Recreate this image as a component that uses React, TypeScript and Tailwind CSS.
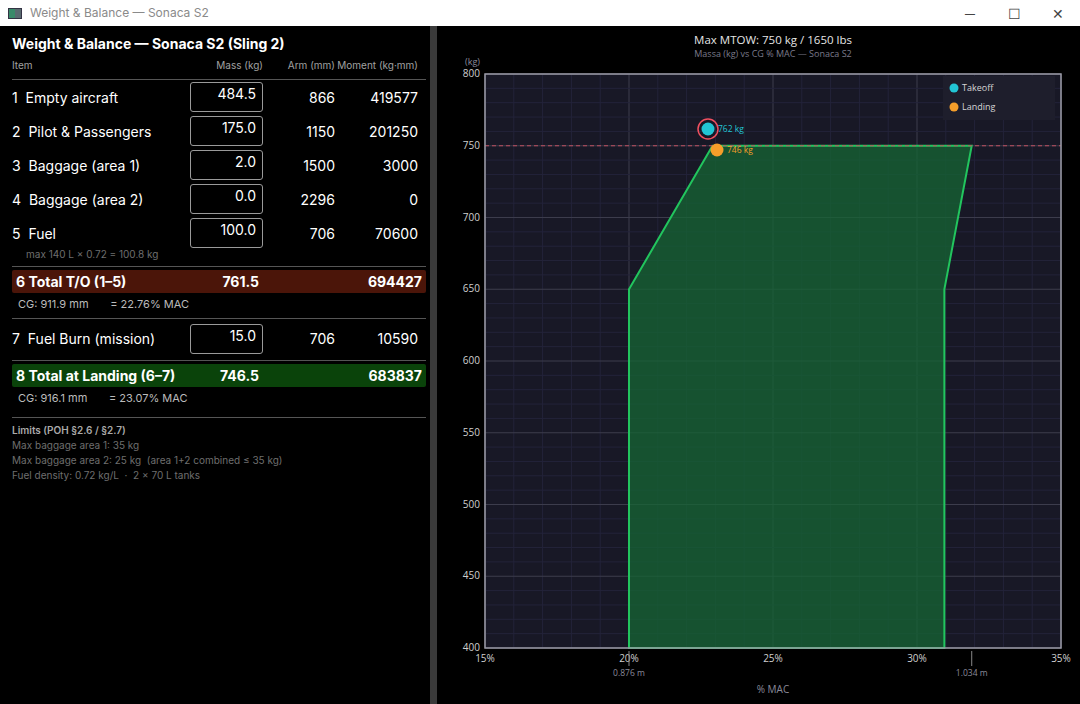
import React from "react";

const rows = [
  ["1", "Empty aircraft", "484.5", "866", "419577"],
  ["2", "Pilot & Passengers", "175.0", "1150", "201250"],
  ["3", "Baggage (area 1)", "2.0", "1500", "3000"],
  ["4", "Baggage (area 2)", "0.0", "2296", "0"],
  ["5", "Fuel", "100.0", "706", "70600"],
];

function Row({ r }: { r: string[] }) {
  return (
    <div className="flex items-center h-[34px]">
      <div className="flex-1 text-[14px] text-white whitespace-nowrap">{r[0]}&nbsp; {r[1]}</div>
      <div className="w-[73px] h-[30px] border border-[#9a9a9a] rounded-[3px] text-right pr-1.5 text-[14px] text-white leading-[22px]">{r[2]}</div>
      <div className="w-[72px] text-right text-[14px] text-white">{r[3]}</div>
      <div className="w-[91px] text-right text-[14px] text-white pr-[8px]">{r[4]}</div>
    </div>
  );
}

function Total({ label, v, m, bg }: { label: string; v: string; m: string; bg: string }) {
  return (
    <div className={`flex items-center h-[23px] ${bg} rounded-[2px] px-1 text-[14px] font-bold text-white whitespace-nowrap`}>
      <div className="w-[170px]">{label}</div>
      <div className="w-[73px] text-right">{v}</div>
      <div className="flex-1 text-right">{m}</div>
    </div>
  );
}

const X = (p: number) => 485 - 437 + (p - 15) * 28.8;
const Y = (m: number) => 74 - 26 + (800 - m) * 1.435;

function Chart() {
  const minorX = [];
  for (let p = 15; p <= 35; p += 1) minorX.push(p);
  const minorY = [];
  for (let m = 400; m <= 800; m += 10) minorY.push(m);
  const env = [
    [20, 400], [20, 650], [22.9, 750], [31.9, 750], [30.95, 650], [30.95, 400],
  ].map(([p, m]) => `${X(p)},${Y(m)}`).join(" ");
  return (
    <svg width="643" height="674" className="block" style={{ fontFamily: '"Open Sans", sans-serif' }}>
      <text x={X(25)} y="18" fill="#e5e5e5" fontSize="11.5" textAnchor="middle">Max MTOW: 750 kg  /  1650 lbs</text>
      <text x={X(25)} y="31" fill="#7a7a8a" fontSize="9" textAnchor="middle">Massa (kg) vs CG % MAC — Sonaca S2</text>
      <rect x={X(15)} y={Y(800)} width={X(35) - X(15)} height={Y(400) - Y(800)} fill="#181826" />
      {minorX.map((p) => (
        <line key={"x" + p} x1={X(p)} x2={X(p)} y1={Y(800)} y2={Y(400)} stroke={p % 5 === 0 ? "#3c3c4c" : "#23233a"} strokeWidth="1" />
      ))}
      {minorY.map((m) => (
        <line key={"y" + m} y1={Y(m)} y2={Y(m)} x1={X(15)} x2={X(35)} stroke={m % 50 === 0 ? "#3c3c4c" : "#23233a"} strokeWidth="1" />
      ))}
      <polygon points={env} fill="#166534" fillOpacity="0.75" stroke="#22c55e" strokeWidth="2" />
      <line x1={X(15)} x2={X(35)} y1={Y(750)} y2={Y(750)} stroke="#c05060" strokeDasharray="4 3" strokeWidth="1" />
      <rect x={X(15)} y={Y(800)} width={X(35) - X(15)} height={Y(400) - Y(800)} fill="none" stroke="#9a9aa6" strokeWidth="1.5" />
      {[400, 450, 500, 550, 600, 650, 700, 750, 800].map((m) => (
        <text key={m} x={X(15) - 5} y={Y(m) + 3} fill="#cfcfcf" fontSize="10" textAnchor="end">{m}</text>
      ))}
      <text x={X(15) - 20} y={Y(800) - 9} fill="#8a8a9a" fontSize="9">(kg)</text>
      {[15, 20, 25, 30, 35].map((p) => (
        <text key={p} x={X(p)} y={Y(400) + 14} fill="#cfcfcf" fontSize="10" textAnchor="middle">{p}%</text>
      ))}
      <line x1={X(20)} x2={X(20)} y1={Y(400) + 3} y2={Y(400) + 18} stroke="#888" />
      <line x1={X(31.9)} x2={X(31.9)} y1={Y(400) + 3} y2={Y(400) + 18} stroke="#888" />
      <text x={X(20)} y={Y(400) + 28} fill="#8a8a9a" fontSize="8.5" textAnchor="middle">0.876 m</text>
      <text x={X(31.9)} y={Y(400) + 28} fill="#8a8a9a" fontSize="8.5" textAnchor="middle">1.034 m</text>
      <text x={X(25)} y={Y(400) + 45} fill="#8a8a9a" fontSize="10" textAnchor="middle">% MAC</text>
      <circle cx={708 - 437} cy={129 - 26} r="10" fill="none" stroke="#f05060" strokeWidth="1.5" />
      <circle cx={708 - 437} cy={129 - 26} r="6.5" fill="#22c5d5" />
      <text x={718 - 437} y={132 - 26} fill="#22c5d5" fontSize="8.5">762 kg</text>
      <circle cx={717 - 437} cy={150 - 26} r="6.5" fill="#f59e2a" />
      <text x={727 - 437} y={153 - 26} fill="#f59e2a" fontSize="8.5">746 kg</text>
      <rect x={943 - 437} y={76 - 26} width={112} height={44} fill="#1e1e2c" />
      <circle cx={954 - 437} cy={88 - 26} r="4.5" fill="#22c5d5" />
      <text x={962 - 437} y={91 - 26} fill="#d5d5d5" fontSize="9">Takeoff</text>
      <circle cx={954 - 437} cy={107 - 26} r="4.5" fill="#f59e2a" />
      <text x={962 - 437} y={110 - 26} fill="#d5d5d5" fontSize="9">Landing</text>
    </svg>
  );
}

export default function App() {
  return (
    <div className="w-[1080px] h-[704px] bg-black flex flex-col overflow-hidden" style={{ fontFamily: "Inter, sans-serif" }}>
      <div className="h-[26px] bg-white flex items-center shrink-0">
        <div className="ml-2 w-[14px] h-[11px] bg-[#5a6a70] border border-[#334] flex"><div className="w-[6px] bg-[#3a8a6a]" /></div>
        <div className="ml-2 text-[12px] text-[#8a8a8a]">Weight &amp; Balance — Sonaca S2</div>
        <div className="ml-auto flex text-[#444] text-[14px]">
          <div className="w-[44px] text-center">─</div>
          <div className="w-[44px] text-center">☐</div>
          <div className="w-[44px] text-center">✕</div>
        </div>
      </div>
      <div className="flex flex-1 min-h-0">
        <div className="w-[430px] pl-3 pr-1 pt-2 shrink-0">
          <div className="text-[14px] font-bold text-white leading-5">Weight &amp; Balance — Sonaca S2 (Sling 2)</div>
          <div className="flex text-[10px] text-[#a0a0a0] mt-1 pb-[6px] border-b border-[#555] whitespace-nowrap">
            <div className="flex-1">Item</div>
            <div className="w-[73px] text-right">Mass (kg)</div>
            <div className="w-[72px] text-right">Arm (mm)</div>
            <div className="w-[91px] text-right pr-[8px]">Moment (kg·mm)</div>
          </div>
          <div>
            {rows.map((r) => <Row key={r[0]} r={r} />)}
          </div>
          <div className="text-[10px] text-[#6e6e6e] pl-[14px] -mt-[3px]">max 140 L × 0.72 = 100.8 kg</div>
          <div className="border-t border-[#555] mt-[4px] pt-[3px]">
            <Total label="6  Total T/O  (1–5)" v="761.5" m="694427" bg="bg-[#4b1509]" />
            <div className="text-[11px] text-[#bbb] pl-[6px] mt-[3px]">CG: 911.9 mm&nbsp;&nbsp;&nbsp;&nbsp;&nbsp;&nbsp;&nbsp;= 22.76% MAC</div>
          </div>
          <div className="border-t border-[#555] mt-[5px] pt-[3px]">
            <Row r={["7", "Fuel Burn (mission)", "15.0", "706", "10590"]} />
          </div>
          <div className="border-t border-[#555] mt-[4px] pt-[3px]">
            <Total label="8  Total at Landing  (6–7)" v="746.5" m="683837" bg="bg-[#0a430a]" />
            <div className="text-[11px] text-[#bbb] pl-[6px] mt-[3px]">CG: 916.1 mm&nbsp;&nbsp;&nbsp;&nbsp;&nbsp;&nbsp;&nbsp;= 23.07% MAC</div>
          </div>
          <div className="border-t border-[#555] mt-[11px] pt-[5px] text-[10px] leading-[15px]">
            <div className="font-semibold text-[#aaa]">Limits (POH §2.6 / §2.7)</div>
            <div className="text-[#6e6e6e]">Max baggage area 1: 35 kg</div>
            <div className="text-[#6e6e6e]">Max baggage area 2: 25 kg&nbsp; (area 1+2 combined ≤ 35 kg)</div>
            <div className="text-[#6e6e6e]">Fuel density: 0.72 kg/L&nbsp; ·&nbsp; 2 × 70 L tanks</div>
          </div>
        </div>
        <div className="w-[7px] bg-[#3a3a3a] shrink-0" />
        <div className="flex-1 min-w-0">
          <Chart />
        </div>
      </div>
    </div>
  );
}
